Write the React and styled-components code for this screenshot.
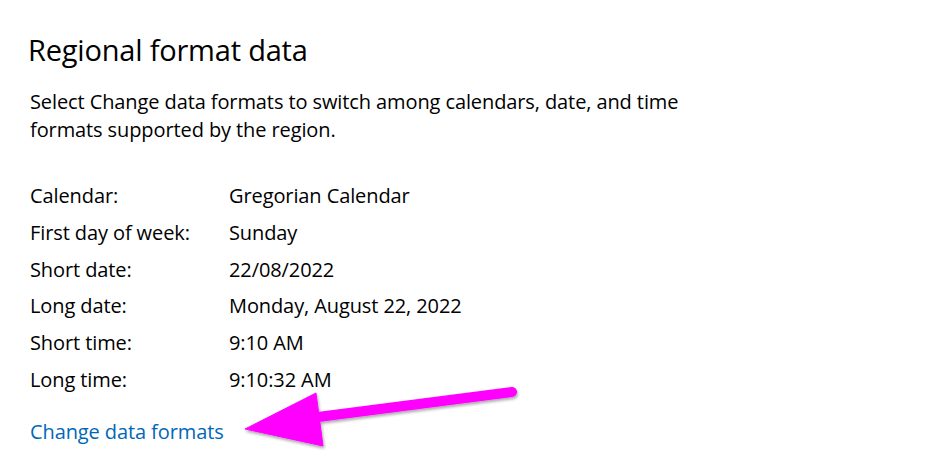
import styled, { createGlobalStyle } from "styled-components";

const GlobalStyle = createGlobalStyle`
  html, body {
    margin: 0;
    padding: 0;
    background: #ffffff;
  }
  body {
    font-family: "Open Sans", "Noto Sans", "Liberation Sans", sans-serif;
    color: #000000;
  }
`;

const rows = [
  ["Calendar:", "Gregorian Calendar"],
  ["First day of week:", "Sunday"],
  ["Short date:", "22/08/2022"],
  ["Long date:", "Monday, August 22, 2022"],
  ["Short time:", "9:10 AM"],
  ["Long time:", "9:10:32 AM"],
];

export default function App() {
  return (
    <>
      <GlobalStyle />
      <StyledPage>
        <Title>Regional format data</Title>
        <Description>
          Select Change data formats to switch among calendars, date, and time
          <br />
          formats supported by the region.
        </Description>
        <FormatTable>
          {rows.map(([label, value]) => (
            <FormatRow key={label}>
              <span>{label}</span>
              <span>{value}</span>
            </FormatRow>
          ))}
        </FormatTable>
        <LinkRow>
          <ChangeLink href="#">Change data formats</ChangeLink>
        </LinkRow>
        <Arrow width="928" height="459" viewBox="0 0 928 459">
          <defs>
            <filter id="shadow" x="-10%" y="-30%" width="120%" height="160%">
              <feDropShadow dx="1" dy="2" stdDeviation="1.5" floodColor="#000" floodOpacity="0.35" />
            </filter>
          </defs>
          <g filter="url(#shadow)" fill="#ff00ff" stroke="#ff00ff">
            <line x1="318" y1="417" x2="512" y2="392" strokeWidth="10" strokeLinecap="round" />
            <polygon points="245,429 316,393 323,446" strokeWidth="1" strokeLinejoin="round" />
          </g>
        </Arrow>
      </StyledPage>
    </>
  );
}

const StyledPage = styled.div`
  position: relative;
  width: 928px;
  height: 459px;
  overflow: hidden;
  padding: 30px 0 0 28px;
  box-sizing: border-box;
`;

const Title = styled.h1`
  margin: 0;
  font-size: 29px;
  font-weight: 400;
  line-height: 40px;
  letter-spacing: -0.2px;
`;

const Description = styled.p`
  margin: 18px 0 0 2px;
  font-size: 20px;
  line-height: 28px;
  letter-spacing: -0.1px;
`;

const FormatTable = styled.div`
  margin: 34px 0 0 2px;
  display: flex;
  flex-direction: column;
`;

const FormatRow = styled.div`
  display: grid;
  grid-template-columns: 199px 1fr;
  font-size: 20px;
  line-height: 36.8px;
  letter-spacing: -0.1px;
`;

const LinkRow = styled.div`
  margin: 19px 0 0 2px;
`;

const ChangeLink = styled.a`
  font-size: 20px;
  line-height: 28px;
  color: #0067b8;
  text-decoration: none;
  letter-spacing: -0.1px;
`;

const Arrow = styled.svg`
  position: absolute;
  left: 0;
  top: 0;
  pointer-events: none;
`;
